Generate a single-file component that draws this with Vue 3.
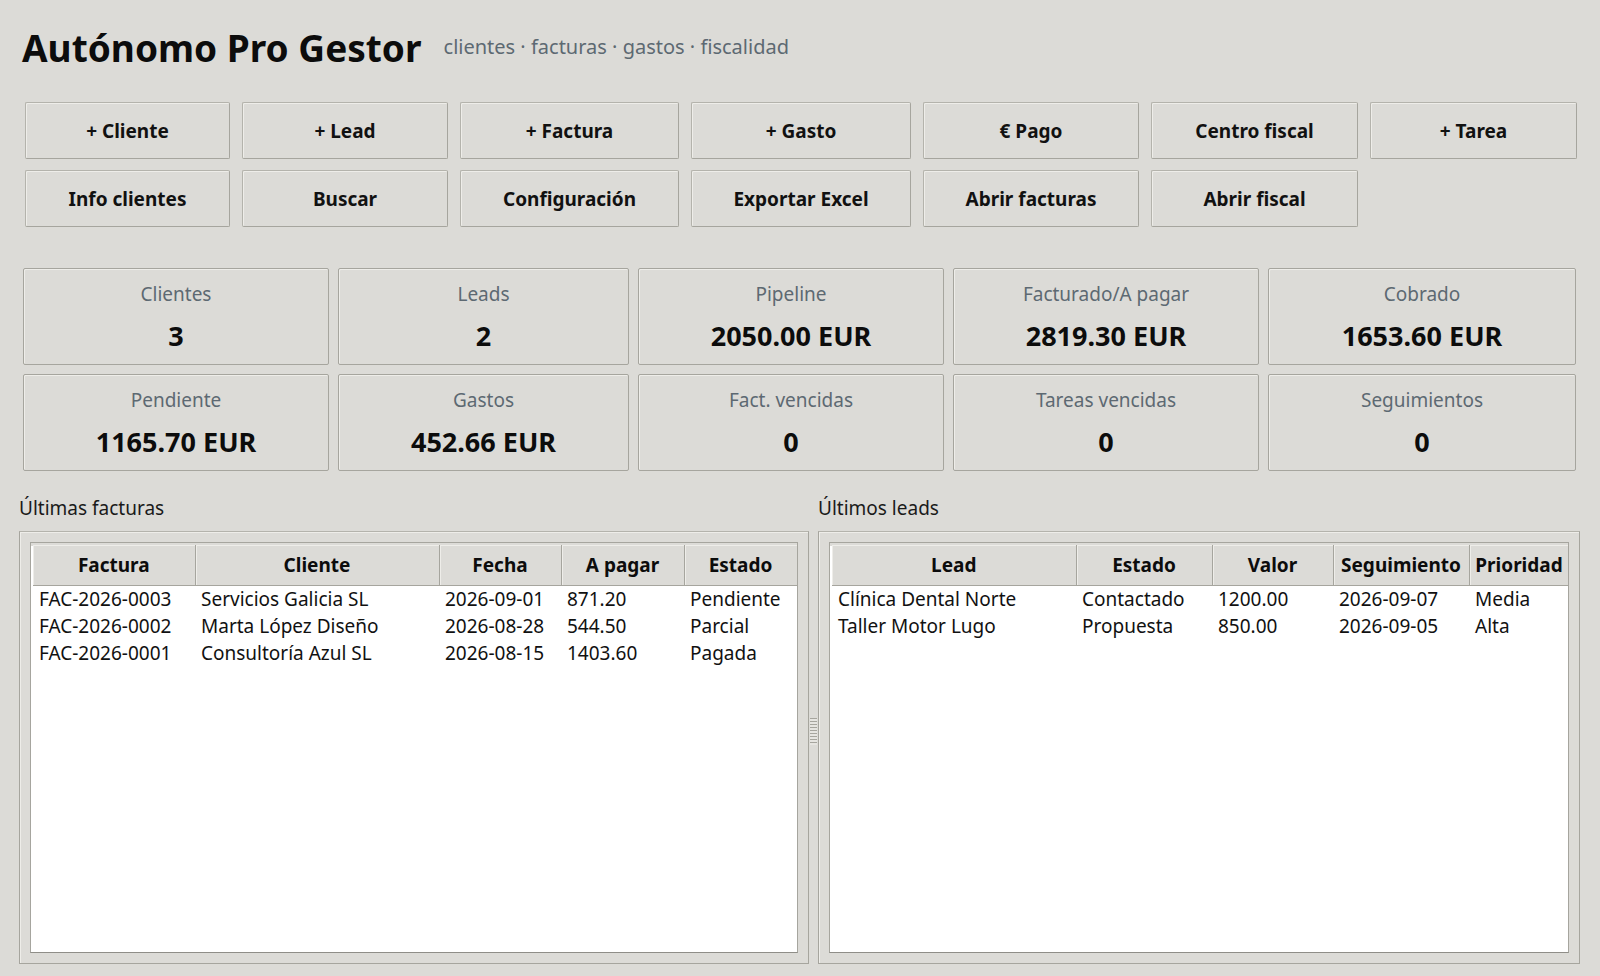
<script setup>
const actionRows = [
  ['+ Cliente', '+ Lead', '+ Factura', '+ Gasto', '€ Pago', 'Centro fiscal', '+ Tarea'],
  ['Info clientes', 'Buscar', 'Configuración', 'Exportar Excel', 'Abrir facturas', 'Abrir fiscal'],
]
const actions = actionRows.flat()

const kpis = [
  { label: 'Clientes', value: '3' },
  { label: 'Leads', value: '2' },
  { label: 'Pipeline', value: '2050.00 EUR' },
  { label: 'Facturado/A pagar', value: '2819.30 EUR' },
  { label: 'Cobrado', value: '1653.60 EUR' },
  { label: 'Pendiente', value: '1165.70 EUR' },
  { label: 'Gastos', value: '452.66 EUR' },
  { label: 'Fact. vencidas', value: '0' },
  { label: 'Tareas vencidas', value: '0' },
  { label: 'Seguimientos', value: '0' },
]

const panels = [
  {
    title: 'Últimas facturas',
    cols: [
      { name: 'Factura', width: 162 },
      { name: 'Cliente', width: 244 },
      { name: 'Fecha', width: 122 },
      { name: 'A pagar', width: 123 },
      { name: 'Estado', width: 113 },
    ],
    rows: [
      ['FAC-2026-0003', 'Servicios Galicia SL', '2026-09-01', '871.20', 'Pendiente'],
      ['FAC-2026-0002', 'Marta López Diseño', '2026-08-28', '544.50', 'Parcial'],
      ['FAC-2026-0001', 'Consultoría Azul SL', '2026-08-15', '1403.60', 'Pagada'],
    ],
  },
  {
    title: 'Últimos leads',
    cols: [
      { name: 'Lead', width: 244 },
      { name: 'Estado', width: 136 },
      { name: 'Valor', width: 121 },
      { name: 'Seguimiento', width: 136 },
      { name: 'Prioridad', width: 100 },
    ],
    rows: [
      ['Clínica Dental Norte', 'Contactado', '1200.00', '2026-09-07', 'Media'],
      ['Taller Motor Lugo', 'Propuesta', '850.00', '2026-09-05', 'Alta'],
    ],
  },
]
</script>

<template>
  <div class="page">
    <header class="top">
      <h1>Autónomo Pro Gestor</h1>
      <span class="sub">clientes · facturas · gastos · fiscalidad</span>
    </header>

    <div class="actions">
      <button v-for="a in actions" :key="a">{{ a }}</button>
    </div>

    <div class="kpis">
      <div v-for="k in kpis" :key="k.label" class="kpi">
        <div class="kpi-label">{{ k.label }}</div>
        <div class="kpi-value">{{ k.value }}</div>
      </div>
    </div>

    <div class="split">
      <template v-for="(p, i) in panels" :key="p.title">
        <div class="grip-col" v-if="i === 1"><div class="grip"></div></div>
        <section class="side" :class="i === 0 ? 'left' : 'right'">
          <div class="side-title">{{ p.title }}</div>
          <div class="frame">
            <div class="tree">
              <table>
                <colgroup>
                  <col v-for="c in p.cols" :key="c.name" :style="{ width: c.width + 'px' }">
                </colgroup>
                <thead>
                  <tr><th v-for="c in p.cols" :key="c.name">{{ c.name }}</th></tr>
                </thead>
                <tbody>
                  <tr v-for="r in p.rows" :key="r[0]">
                    <td v-for="(v, j) in r" :key="j">{{ v }}</td>
                  </tr>
                </tbody>
              </table>
            </div>
          </div>
        </section>
      </template>
    </div>
  </div>
</template>

<style>
html, body {
  margin: 0;
  background: #dcdbd7;
}
</style>

<style scoped>
.page {
  width: 1600px;
  height: 976px;
  box-sizing: border-box;
  display: flex;
  flex-direction: column;
  background: #dcdbd7;
  color: #0c0c0c;
  font-family: "Noto Sans", sans-serif;
  overflow: hidden;
}

.top {
  display: flex;
  align-items: center;
  height: 94px;
  padding-left: 22px;
  flex-shrink: 0;
}

h1 {
  margin: 0 22px 0 0;
  font-size: 37px;
  font-weight: 700;
  line-height: 1;
}

.sub {
  font-size: 20px;
  color: #5d6972;
  margin-top: -2px;
}

.actions {
  display: grid;
  grid-template-columns: 205px 206px 219px 220px 216px 207px 207px;
  grid-auto-rows: 57px;
  column-gap: 12px;
  row-gap: 11px;
  margin: 8px 0 0 25px;
}

button {
  margin: 0;
  padding: 0;
  font: 700 19px "Noto Sans", sans-serif;
  color: #111;
  background: #dcdbd7;
  border: 1px solid #a6a59e;
  border-top-color: #b4b3ac;
  border-left-color: #b4b3ac;
  border-radius: 2px;
  box-shadow: inset 1px 1px 0 #eeede9;
}

.kpis {
  display: grid;
  grid-template-columns: 306px 291px 306px 306px 308px;
  grid-auto-rows: 97px;
  gap: 9px;
  margin: 41px 0 0 23px;
}

.kpi {
  border: 1px solid #a6a59e;
  border-radius: 2px;
  box-shadow: inset 1px 1px 0 #eeede9;
  text-align: center;
}

.kpi-label {
  margin-top: 12px;
  font-size: 19px;
  line-height: 26px;
  color: #5d6972;
}

.kpi-value {
  margin-top: 11px;
  font-size: 27px;
  font-weight: 700;
  line-height: 36px;
  color: #0c0c0c;
}

.split {
  flex: 1;
  display: flex;
  margin: 24px 20px 12px 19px;
  min-height: 0;
}

.side {
  display: flex;
  flex-direction: column;
  min-width: 0;
}

.left {
  width: 790px;
}

.right {
  flex: 1;
}

.grip-col {
  width: 9px;
  display: flex;
  align-items: center;
  justify-content: center;
}

.grip {
  width: 7px;
  height: 27px;
  margin-top: 4px;
  background: repeating-linear-gradient(to bottom, #a6a59e 0 1px, #e6e5e1 1px 3px);
}

.side-title {
  font-size: 19px;
  line-height: 26px;
  height: 36px;
  color: #1a1a1a;
}

.frame {
  flex: 1;
  border: 1px solid #a6a59e;
  border-top-color: #b4b3ac;
  box-shadow: inset 1px 1px 0 #eeede9;
  padding: 10px;
  min-height: 0;
}

.tree {
  height: 100%;
  box-sizing: border-box;
  background: #fff;
  border: 1px solid #a6a59e;
  border-bottom-color: #8f8e88;
  padding: 2px 1px 0 2px;
  box-shadow: inset 0 3px 0 #dcdbd7;
  overflow: hidden;
}

table {
  border-collapse: collapse;
  table-layout: fixed;
  width: 100%;
  font-size: 19px;
}

th {
  height: 40px;
  padding: 0;
  box-sizing: border-box;
  font-weight: 700;
  background: #dcdbd7;
  border-right: 1px solid #a6a59e;
  border-bottom: 1px solid #a6a59e;
  box-shadow: inset 1px 1px 0 #eeede9;
  white-space: nowrap;
  overflow: hidden;
}

td {
  padding: 0 0 0 6px;
  height: 27px;
  line-height: 27px;
  white-space: nowrap;
  overflow: hidden;
  color: #111;
}

tbody tr:first-child td {
  padding-top: 0;
}
</style>
